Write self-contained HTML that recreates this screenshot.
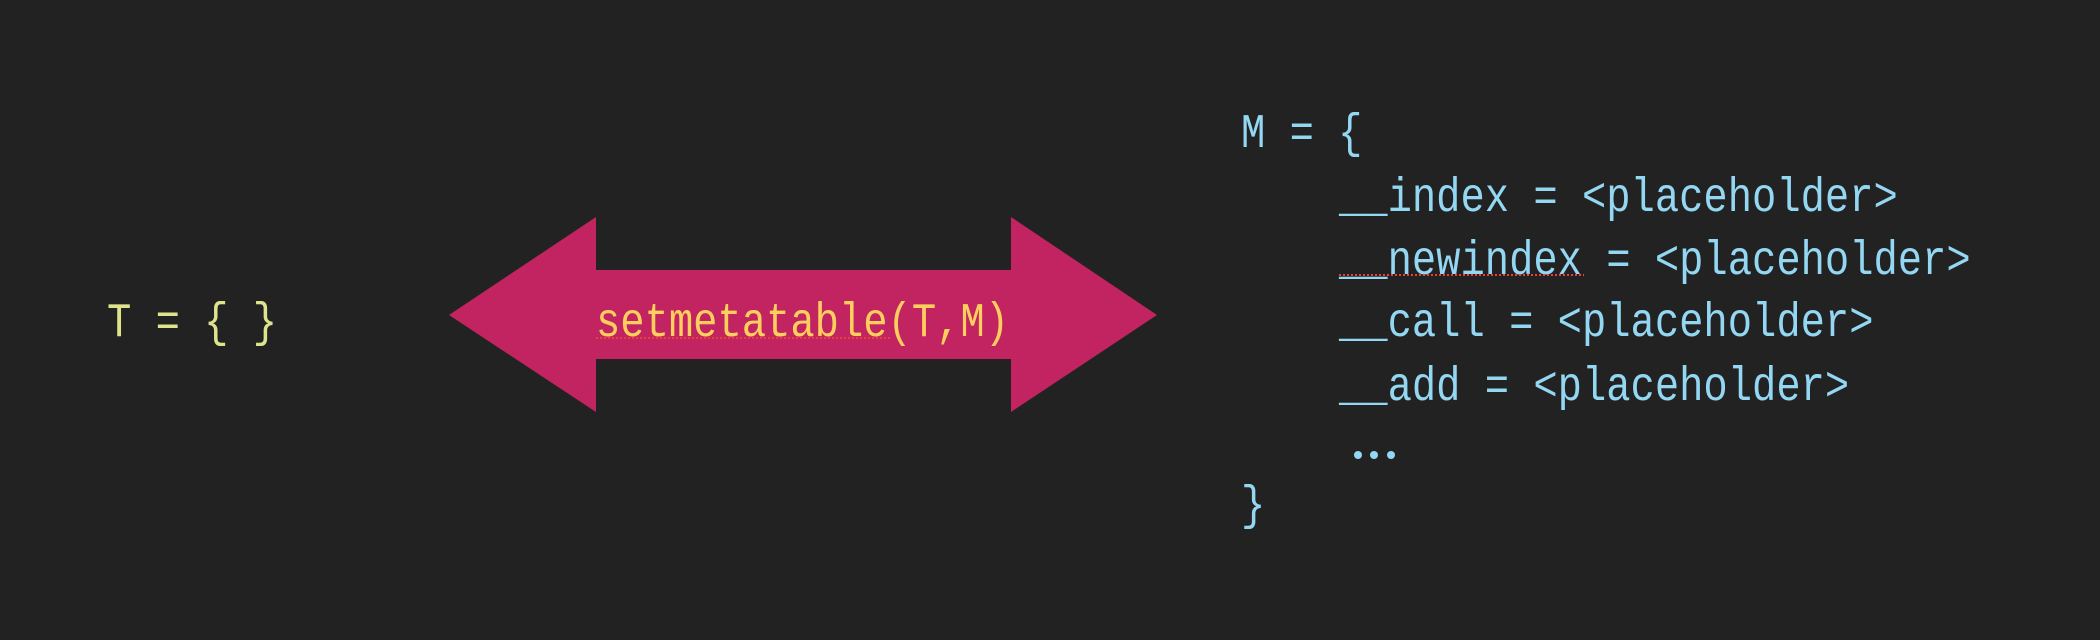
<!DOCTYPE html>
<html><head><meta charset="utf-8"><style>
html,body{margin:0;padding:0;background:#222222;width:2100px;height:640px;overflow:hidden}
svg{display:block}
text{font-family:"Liberation Mono",monospace;font-size:40.5px;white-space:pre}
</style></head><body>
<svg width="2100" height="640" viewBox="0 0 2100 640">
<rect width="2100" height="640" fill="#222222"/>
<polygon points="449,315 596,217 596,270 1011,270 1011,217 1157,315 1011,412 1011,359 596,359 596,412" fill="#c22462"/>
<text transform="translate(107,336) scale(1,1.2)" fill="#dfe48c">T = { }</text>
<text transform="translate(596,336) scale(1,1.2)" fill="#ffcf5e">setmetatable(T,M)</text>
<line x1="596" y1="338" x2="890" y2="338" stroke="#e8403a" stroke-width="2" stroke-dasharray="2,2"/>
<g fill="#93d7f2">
<text transform="translate(1241,147) scale(1,1.2)">M = {</text>
<text transform="translate(1339,211) scale(1,1.2)">__index = &lt;placeholder&gt;</text>
<text transform="translate(1339,274) scale(1,1.2)">__newindex = &lt;placeholder&gt;</text>
<text transform="translate(1339,336) scale(1,1.2)">__call = &lt;placeholder&gt;</text>
<text transform="translate(1339,400) scale(1,1.2)">__add = &lt;placeholder&gt;</text>
<circle cx="1358" cy="455" r="4"/><circle cx="1374" cy="455" r="4"/><circle cx="1391" cy="455" r="4"/>
<text transform="translate(1241,519) scale(1,1.2)">}</text>
</g>
<line x1="1339" y1="275" x2="1584" y2="275" stroke="#e8403a" stroke-width="2" stroke-dasharray="2,2"/>
</svg>
</body></html>
